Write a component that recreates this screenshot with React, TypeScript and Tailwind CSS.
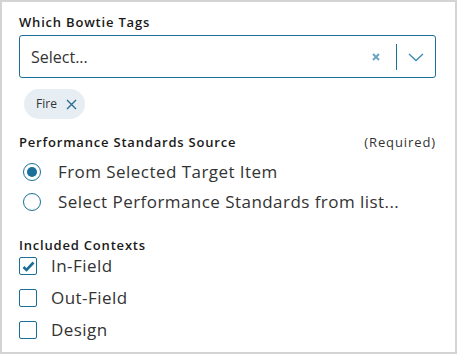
import React from "react";

const teal = "#1b6f99";

const Radio = ({ checked, label }: { checked?: boolean; label: string }) => (
  <label className="flex items-center h-[30px]">
    <span className="w-[18px] h-[18px] rounded-full border-[1.5px] border-[#1b6f99] flex items-center justify-center ml-[4px]">
      {checked && <span className="w-[10px] h-[10px] rounded-full bg-[#1b6f99]" />}
    </span>
    <span className="ml-[17px] text-[17px] text-[#333] tracking-[0.45px]">{label}</span>
  </label>
);

const Checkbox = ({ checked, label }: { checked?: boolean; label: string }) => (
  <label className="flex items-center h-[32px]">
    <span className="w-[18px] h-[18px] rounded-[2px] border-[1.5px] border-[#1b6f99] flex items-center justify-center">
      {checked && (
        <svg width="13" height="11" viewBox="0 0 13 11">
          <path d="M1.5 6 L4.5 9 L11.5 1.5" fill="none" stroke={teal} strokeWidth="2.6" />
        </svg>
      )}
    </span>
    <span className="ml-[14px] text-[17px] text-[#333] tracking-[0.45px]">{label}</span>
  </label>
);

const App = () => {
  return (
    <div
      className="w-[457px] h-[354px] border-2 border-[#d4d4d4] bg-white pl-[17px] pr-[19px] pt-[10px]"
      style={{ fontFamily: '"Open Sans", sans-serif' }}
    >
      <div className="text-[13px] font-[550] text-[#1a1a1a] tracking-[0.8px] leading-[20px]">Which Bowtie Tags</div>
      <div className="mt-[3px] h-[43px] border border-[#1b6f99] rounded-[3px] flex items-center">
        <span className="ml-[11px] flex-1 text-[16px] text-[#333]">Select...</span>
        <svg width="10" height="10" viewBox="0 0 10 10" className="mr-[15px]">
          <path d="M2 2 L8 8 M8 2 L2 8" stroke="#6aa5c4" strokeWidth="2" />
        </svg>
        <span className="w-[1px] h-[26px] bg-[#1b6f99]" />
        <svg width="16" height="10" viewBox="0 0 16 10" className="mx-[11px]">
          <path d="M1 2 L8 8.5 L15 2" fill="none" stroke="#3f89b0" strokeWidth="1.3" />
        </svg>
      </div>
      <div className="mt-[11px] ml-[5px] w-[61px] h-[30px] rounded-full bg-[#e6eef4] flex items-center">
        <span className="ml-[12px] text-[12px] text-[#333]">Fire</span>
        <svg width="11" height="11" viewBox="0 0 11 11" className="ml-[9px]">
          <path d="M1 1 L10 10 M10 1 L1 10" stroke="#2d6c8f" strokeWidth="1.4" />
        </svg>
      </div>
      <div className="mt-[13px] flex justify-between text-[13px] text-[#1a1a1a] leading-[20px]">
        <span className="font-[550] tracking-[0.8px]">Performance Standards Source</span>
        <span className="tracking-[0.9px] text-[#333]">(Required)</span>
      </div>
      <div className="mt-[5px]">
        <Radio checked label="From Selected Target Item" />
        <Radio label="Select Performance Standards from list..." />
      </div>
      <div className="mt-[18px] text-[13px] font-[550] text-[#1a1a1a] tracking-[0.8px] leading-[20px]">Included Contexts</div>
      <div className="-mt-[5px]">
        <Checkbox checked label="In-Field" />
        <Checkbox label="Out-Field" />
        <Checkbox label="Design" />
      </div>
    </div>
  );
};

export default App;
